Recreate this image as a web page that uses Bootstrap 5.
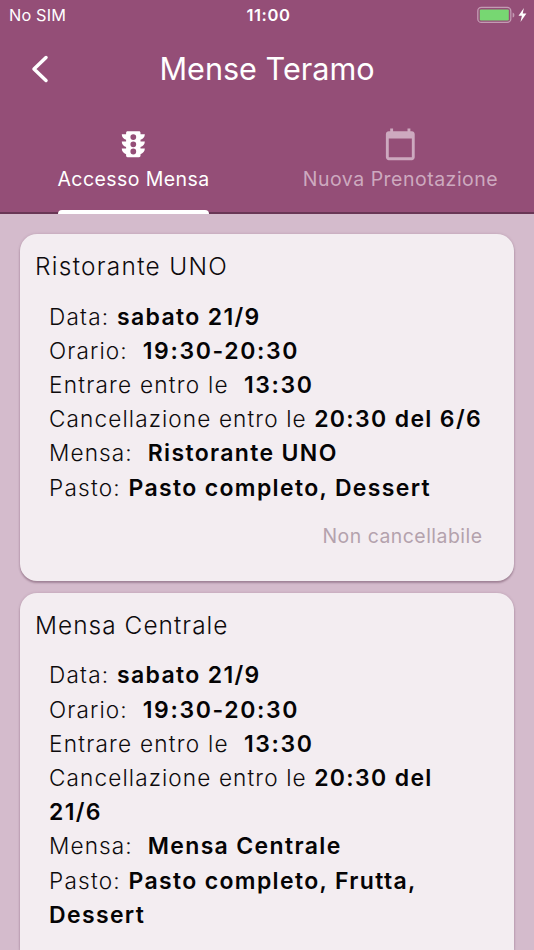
<!DOCTYPE html>
<html lang="it">
<head>
<meta charset="utf-8">
<meta name="viewport" content="width=device-width, initial-scale=1">
<title>Mense Teramo</title>
<link href="https://cdn.jsdelivr.net/npm/bootstrap@5.3.0/dist/css/bootstrap.min.css" rel="stylesheet">
<style>
body{font-family:Inter,"Liberation Sans",sans-serif;background:#d4bbcc;color:#0d0a0c;height:950px;overflow:hidden}
.app-head{background:#944e77;height:214px;border-bottom:2px solid #693655;color:#fff}
.status-row{height:30px;padding:0 7px 0 9px;font-size:16.3px;line-height:30px}
.status-row .col:first-child{letter-spacing:.15px}
.clock{font-size:16.6px;letter-spacing:.6px;padding-left:1px}
.title-row{height:77px;padding:0 31px}
.screen-title{font-size:30.6px;font-weight:400;letter-spacing:0;line-height:77px}
.side-slot{width:18px}
.tabs-row{height:107px}
.tab-item{color:#fff;font-size:19.5px;letter-spacing:.42px;line-height:28px;padding-top:19.5px;text-decoration:none;height:107px}
.tab-item svg{width:34.6px;height:34.6px;flex:none}
.tab-item.idle{color:#cda9bf;letter-spacing:.5px}
.tab-text{margin-top:4px}
.marker{width:151px;height:4px;background:#fff;border-radius:4px 4px 0 0}
.meal-list{height:736px;padding:20px 20px 0;gap:12px}
.meal-card{--bs-card-bg:#f3edf1;--bs-card-border-width:0;--bs-card-border-radius:17px;--bs-card-color:#0d0a0c;box-shadow:0 2px 2px rgba(70,35,60,.32),0 0 3px rgba(90,50,75,.2);padding:14px 15px 0}
.meal-name{font-size:24.4px;font-weight:350;letter-spacing:1.3px;line-height:36px;margin:0}
.meal-name.tight{letter-spacing:1.05px}
.meal-lines{font-size:22.6px;font-weight:330;letter-spacing:1.1px;line-height:34.2px;padding:15.6px 0 0 14px}
.meal-lines .wide{letter-spacing:1.22px}
.meal-lines b{font-size:23px;line-height:1;font-weight:600;color:#050405;letter-spacing:1.35px}
.meal-lines b.hours{letter-spacing:1.65px}
.meal-note{font-size:19.4px;letter-spacing:.5px;line-height:28px;color:#b4a2ad;padding:17px 16.5px 31px 0}
</style>
</head>
<body>
<header class="app-head">
  <div class="status-row row g-0 align-items-center">
    <div class="col">No SIM</div>
    <div class="col text-center fw-semibold clock">11:00</div>
    <div class="col d-flex justify-content-end align-items-center">
      <svg width="50" height="18" viewBox="0 0 50 18"><rect x=".8" y="1.4" width="33" height="15" rx="3.5" fill="none" stroke="#c39bb3" stroke-width="1.3"/><rect x="2.8" y="3.4" width="29" height="11" rx="1.2" fill="#77d772"/><path d="M35.6 6.4c2.4.7 2.4 4.5 0 5.2z" fill="#c39bb3"/><path d="M46.9 1.9 41.5 9.7h3.4L43.5 16l5.9-8.4h-3.7z" fill="#fff"/></svg>
    </div>
  </div>
  <div class="title-row d-flex align-items-center justify-content-between">
    <div class="side-slot d-flex"><svg width="18" height="28" viewBox="0 0 18 28"><path d="M15 2.5 3 14l12 11.5" fill="none" stroke="#fff" stroke-width="3.5" stroke-linecap="round" stroke-linejoin="round"/></svg></div>
    <h1 class="screen-title m-0">Mense Teramo</h1>
    <div class="side-slot"></div>
  </div>
  <nav class="tabs-row row g-0">
    <a href="#" class="tab-item col-6 d-flex flex-column align-items-center">
      <svg viewBox="0 0 24 24" fill="currentColor"><path fill-rule="evenodd" d="M20 10h-3V8.86c1.72-.45 3-2 3-3.86h-3V4c0-.55-.45-1-1-1H8c-.55 0-1 .45-1 1v1H4c0 1.86 1.28 3.41 3 3.86V10H4c0 1.86 1.28 3.41 3 3.86V15H4c0 1.86 1.28 3.41 3 3.86V20c0 .55.45 1 1 1h8c.55 0 1-.45 1-1v-1.14c1.72-.45 3-2 3-3.86h-3v-1.14c1.72-.45 3-2 3-3.86zm-8 9a2 2 0 1 1 0-4 2 2 0 0 1 0 4zm0-5a2 2 0 1 1 0-4 2 2 0 0 1 0 4zm0-5a2 2 0 1 1 0-4 2 2 0 0 1 0 4z"/></svg>
      <span class="tab-text">Accesso Mensa</span>
      <span class="marker mt-auto"></span>
    </a>
    <a href="#" class="tab-item idle col-6 d-flex flex-column align-items-center">
      <svg viewBox="0 0 24 24" fill="currentColor"><path d="M20 3h-1V1h-2v2H7V1H5v2H4c-1.1 0-2 .9-2 2v16c0 1.1.9 2 2 2h16c1.1 0 2-.9 2-2V5c0-1.1-.9-2-2-2zm0 18H4V8h16v13z"/></svg>
      <span class="tab-text">Nuova Prenotazione</span>
    </a>
  </nav>
</header>
<main class="meal-list d-flex flex-column">
  <article class="card meal-card flex-shrink-0">
    <h2 class="meal-name">Ristorante UNO</h2>
    <div class="meal-lines">
      <div class="wide">Data: <b>sabato 21/9</b></div>
      <div>Orario:&nbsp; <b class="hours">19:30-20:30</b></div>
      <div class="wide">Entrare entro le&nbsp; <b class="hours">13:30</b></div>
      <div class="text-nowrap">Cancellazione entro le <b>20:30 del 6/6</b></div>
      <div>Mensa:&nbsp; <b>Ristorante UNO</b></div>
      <div class="wide">Pasto: <b>Pasto completo, Dessert</b></div>
    </div>
    <div class="meal-note text-end">Non cancellabile</div>
  </article>
  <article class="card meal-card rounded-bottom-0 flex-grow-1">
    <h2 class="meal-name tight">Mensa Centrale</h2>
    <div class="meal-lines">
      <div class="wide">Data: <b>sabato 21/9</b></div>
      <div>Orario:&nbsp; <b class="hours">19:30-20:30</b></div>
      <div class="wide">Entrare entro le&nbsp; <b class="hours">13:30</b></div>
      <div>Cancellazione entro le <b>20:30 del<br>21/6</b></div>
      <div>Mensa:&nbsp; <b>Mensa Centrale</b></div>
      <div class="wide">Pasto: <b>Pasto completo, Frutta,<br>Dessert</b></div>
    </div>
  </article>
</main>
<script src="https://cdn.jsdelivr.net/npm/bootstrap@5.3.0/dist/js/bootstrap.bundle.min.js"></script>
</body>
</html>
